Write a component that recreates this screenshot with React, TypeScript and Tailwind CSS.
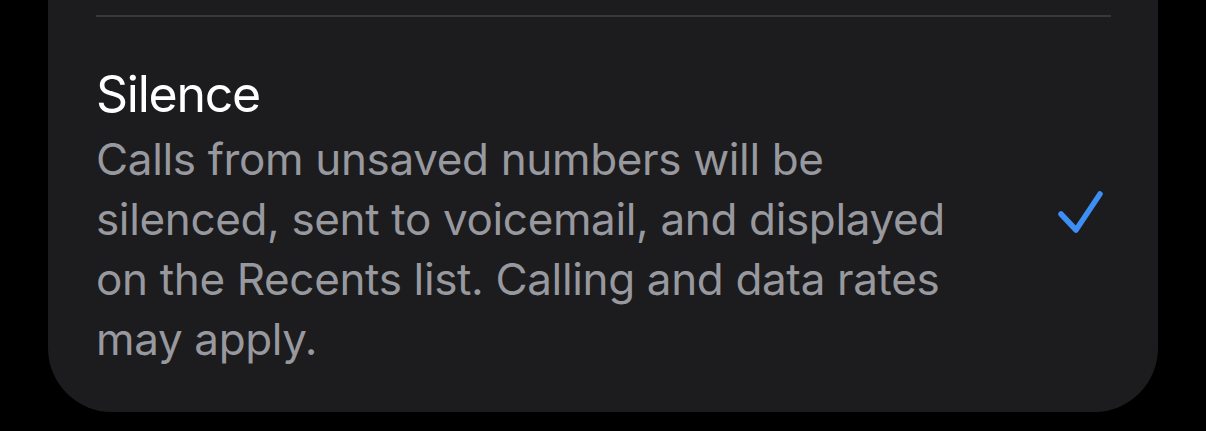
export default function App() {
  return (
    <div className="h-[431px] w-[1206px] overflow-hidden bg-black">
      <div className="ml-[48px] w-[1110px] rounded-b-[64px] bg-[#1c1c1e] pb-[43px]">
        {/* divider from the row above */}
        <div className="ml-[48px] mr-[47px] pt-[15px]">
          <div className="h-[2px] bg-[#38383a]" />
        </div>

        <div className="flex items-center pl-[48px] pr-[54px] pt-[46px]">
          <div className="flex-1" style={{ fontFamily: "Inter, 'Liberation Sans', sans-serif" }}>
            <div className="text-[50px] leading-[62px] tracking-[-0.025em] text-white">Silence</div>
            <p className="mt-[4px] max-w-[870px] text-[44px] leading-[60px] tracking-[-0.008em] text-[#98989f]">
              Calls from unsaved numbers will be silenced, sent to voicemail, and displayed on the Recents list.
              Calling and data rates may apply.
            </p>
          </div>
          <svg width="48" height="48" viewBox="0 0 48 48" fill="none" className="-mt-[6px] shrink-0">
            <path
              d="M5 25 L20 41 L44 5"
              stroke="#3e8ff5"
              strokeWidth="5.5"
              strokeLinecap="round"
              strokeLinejoin="round"
            />
          </svg>
        </div>
      </div>
    </div>
  );
}
